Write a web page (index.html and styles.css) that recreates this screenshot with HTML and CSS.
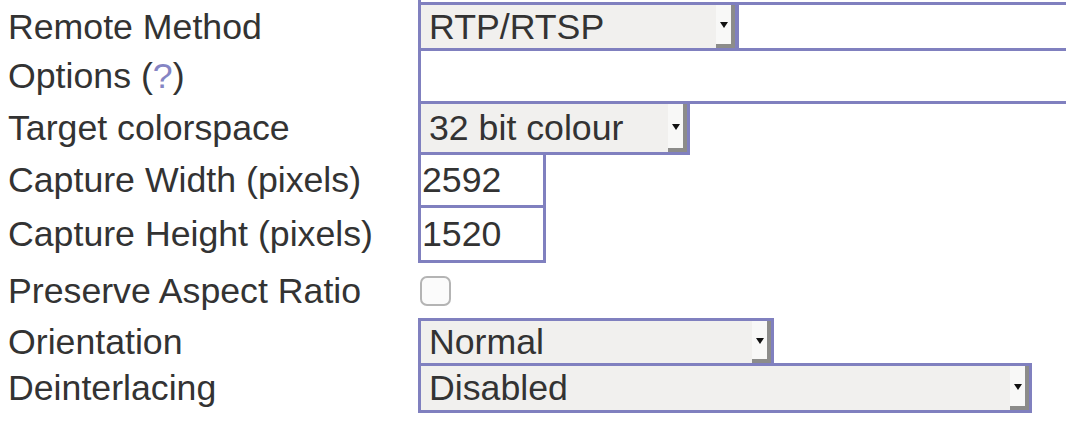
FILE: index.html
```html
<!DOCTYPE html>
<html>
<head>
<meta charset="utf-8">
<link rel="stylesheet" href="styles.css">
</head>
<body>
<div class="form">
  <div class="row row-prev">
    <div class="label"></div>
    <div class="ctrl"><div class="prevbox"></div></div>
  </div>
  <div class="row r1 overlap">
    <div class="label">Remote Method</div>
    <div class="ctrl">
      <div class="select w-rtp"><span class="val">RTP/RTSP</span><span class="btn"><span class="arrow"></span></span></div>
      <div class="text w-rest"></div>
    </div>
  </div>
  <div class="row r2 overlap">
    <div class="label">Options (<span class="help">?</span>)</div>
    <div class="ctrl"><div class="text w-wide"></div></div>
  </div>
  <div class="row r3 overlap">
    <div class="label">Target colorspace</div>
    <div class="ctrl"><div class="select w-color"><span class="val">32 bit colour</span><span class="btn"><span class="arrow"></span></span></div></div>
  </div>
  <div class="row r4 overlap">
    <div class="label">Capture Width (pixels)</div>
    <div class="ctrl"><div class="text w-num"><span class="tval">2592</span></div></div>
  </div>
  <div class="row r5 overlap">
    <div class="label">Capture Height (pixels)</div>
    <div class="ctrl"><div class="text w-num"><span class="tval">1520</span></div></div>
  </div>
  <div class="row r6">
    <div class="label">Preserve Aspect Ratio</div>
    <div class="ctrl"><span class="checkbox"></span></div>
  </div>
  <div class="row r7">
    <div class="label">Orientation</div>
    <div class="ctrl"><div class="select w-orient"><span class="val">Normal</span><span class="btn"><span class="arrow"></span></span></div></div>
  </div>
  <div class="row r8 overlap">
    <div class="label">Deinterlacing</div>
    <div class="ctrl"><div class="select w-deint"><span class="val">Disabled</span><span class="btn"><span class="arrow"></span></span></div></div>
  </div>
</div>
</body>
</html>
```
FILE: styles.css
```css
html, body {
  margin: 0;
  padding: 0;
  background: #ffffff;
}
body {
  width: 1066px;
  height: 438px;
  overflow: hidden;
  font-family: "Liberation Sans", Arial, sans-serif;
  font-size: 35.7px;
  color: #333333;
}
.form {
  display: flex;
  flex-direction: column;
  padding-left: 8px;
  width: 1058px;
  overflow: hidden;
}
.row {
  display: flex;
  align-items: center;
}
.row.overlap {
  margin-top: -3px;
}
.label {
  width: 410px;
  flex: none;
  line-height: 40px;
  white-space: nowrap;
}
.help {
  color: #8585c4;
}
.ctrl {
  display: flex;
  align-self: stretch;
  align-items: center;
  flex: none;
}
.row-prev { height: 5px; }
.prevbox {
  width: 648px;
  height: 5px;
  box-sizing: border-box;
  border-left: 3px solid #8080bf;
  border-bottom: 3px solid #8080bf;
}
.r1 { height: 49px; }
.r2 { height: 56px; }
.r3 { height: 54px; }
.r4 { height: 56px; }
.r5 { height: 58px; }
.r6 { height: 55px; }
.r7 { height: 48px; }
.r8 { height: 50px; }

.select, .text {
  box-sizing: border-box;
  height: 100%;
  border: 3px solid #8080bf;
  display: flex;
  align-items: center;
  flex: none;
}
.select {
  background: #f1f0ee;
}
.text {
  background: #ffffff;
}
.val {
  flex: 1;
  padding-left: 8px;
  line-height: 40px;
  white-space: nowrap;
}
.tval {
  padding-left: 1px;
  line-height: 40px;
}
.btn {
  align-self: stretch;
  width: 15px;
  background: #f8f8f7;
  border-right: 4px solid #8c8c8a;
  border-bottom: 4px solid #8c8c8a;
  display: flex;
  align-items: center;
  justify-content: center;
}
.arrow {
  width: 0;
  height: 0;
  border-left: 4px solid transparent;
  border-right: 4px solid transparent;
  border-top: 6px solid #111111;
  margin-top: 1px;
}
.w-rtp { width: 320px; }
.w-rest {
  width: 340px;
  margin-left: -2px;
  border-right: none;
}
.w-wide { width: 660px; border-right: none; }
.w-color { width: 272px; }
.w-num { width: 128px; }
.w-orient { width: 356px; }
.w-deint { width: 614px; }
.checkbox {
  width: 31px;
  height: 30px;
  box-sizing: border-box;
  margin-left: 2px;
  border: 2px solid #b4b4b4;
  border-radius: 7px;
  background: #fbfbfb;
}
```
